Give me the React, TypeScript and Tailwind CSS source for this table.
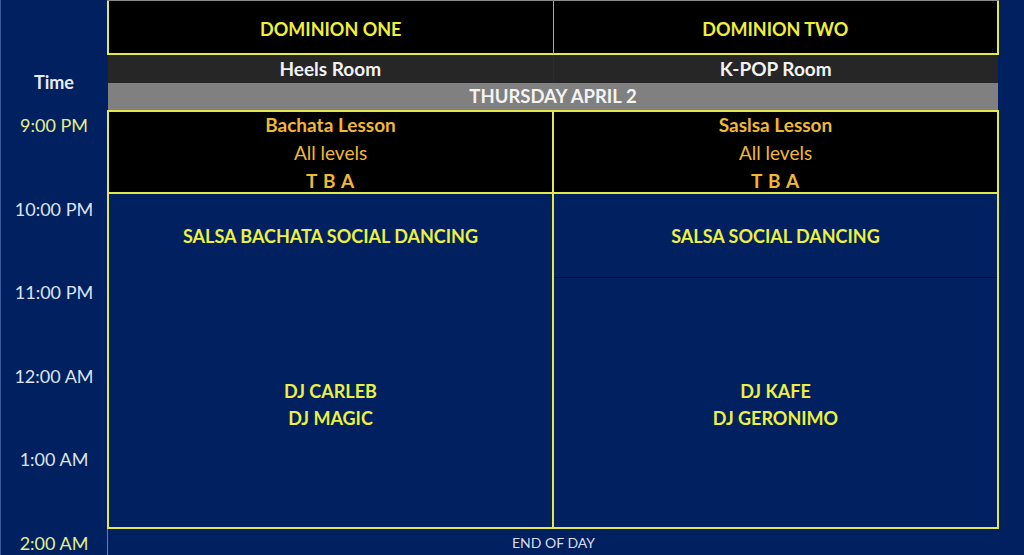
import React from "react";

const Y = "border-[#E4E84A]";

export default function App() {
  const times = ["9:00 PM", "10:00 PM", "11:00 PM", "12:00 AM", "1:00 AM"];
  return (
    <div
      className="w-[1024px] h-[555px] bg-[#002060] flex overflow-hidden"
      style={{ fontFamily: "Lato, 'Noto Sans', sans-serif" }}
    >
      {/* time column */}
      <div className="w-[107px] shrink-0 flex flex-col border-l border-[#3a5a9a]">
        <div className="h-[55px]" />
        <div className="h-[55px] flex items-center justify-center text-[18px] font-bold text-[#E8ECF4] pb-[1px]">
          Time
        </div>
        {times.map((t, i) => (
          <div
            key={t}
            className={`h-[83.5px] shrink-0 flex justify-center pt-[3px] leading-[24px] text-[18px] ${
              i === 0 ? "text-[#E4EE8C]" : "text-[#DDE3EE]"
            }`}
          >
            {t}
          </div>
        ))}
        <div className="flex justify-center pt-[3px] leading-[24px] text-[18px] text-[#E4EE8C]">
          2:00 AM
        </div>
      </div>

      {/* schedule */}
      <div className="w-[892px] shrink-0 flex flex-col">
        {/* venues */}
        <div className="h-[55px] border-t border-[#8a8a8a] flex">
          <div className={`flex-1 bg-black border-l-2 border-b-2 border-r ${Y} border-r-[#B8A878] flex items-center justify-center pt-[4px] font-bold text-[18px] text-[#F0F038]`}>
            DOMINION ONE
          </div>
          <div className={`flex-1 bg-black border-r-2 border-b-2 ${Y} flex items-center justify-center pt-[4px] font-bold text-[18px] text-[#F0F038]`}>
            DOMINION TWO
          </div>
        </div>
        {/* rooms */}
        <div className="h-[28px] flex bg-[#262626] ml-[1px] mr-[1px]">
          <div className="flex-1 border-r border-[#1a2a5a] flex items-center justify-center font-bold text-[19px] text-[#F2F2F2]">
            Heels Room
          </div>
          <div className="flex-1 flex items-center justify-center font-bold text-[19px] text-[#F2F2F2]">
            K-POP Room
          </div>
        </div>
        {/* date */}
        <div className="h-[27px] bg-[#808080] ml-[1px] mr-[1px] flex items-center justify-center font-bold text-[18.5px] text-[#F4F4F4]">
          THURSDAY APRIL 2
        </div>
        {/* lessons */}
        <div className={`h-[84px] flex bg-black border-2 ${Y}`}>
          {[["Bachata Lesson"], ["Saslsa Lesson"]].map(([title], i) => (
            <div
              key={title}
              className={`flex-1 flex flex-col items-center -mt-[1px] text-[19px] text-[#F0B834] ${
                i === 0 ? `border-r-2 ${Y}` : ""
              }`}
            >
              <div className="font-bold leading-[28px]">{title}</div>
              <div className="leading-[28px]">All levels</div>
              <div className="font-bold leading-[28px] tracking-[0.04em]">T B A</div>
            </div>
          ))}
        </div>
        {/* social */}
        <div className={`h-[335px] flex border-2 border-t-0 ${Y}`}>
          <div className={`flex-1 flex flex-col items-center border-r-2 ${Y} font-bold text-[18px] text-[#ECF040]`}>
            <div className="mt-[30px] leading-[24px]">SALSA BACHATA SOCIAL DANCING</div>
            <div className="mt-[130px] leading-[27px]">DJ CARLEB</div>
            <div className="leading-[27px]">DJ MAGIC</div>
          </div>
          <div className="flex-1 flex flex-col font-bold text-[18px] text-[#ECF040]">
            <div className="h-[84px] border-b border-[#0a0a1a] flex justify-center">
              <div className="mt-[30px] leading-[24px]">SALSA SOCIAL DANCING</div>
            </div>
            <div className="flex flex-col items-center">
              <div className="mt-[100px] leading-[27px]">DJ KAFE</div>
              <div className="leading-[27px]">DJ GERONIMO</div>
            </div>
          </div>
        </div>
        {/* end */}
        <div className="flex-1 border-l border-[#7a7a8a] flex justify-center pt-[4px] text-[14px] leading-[20px] text-[#D8DCE8]">
          END OF DAY
        </div>
      </div>
      <div className="flex-1" />
    </div>
  );
}
